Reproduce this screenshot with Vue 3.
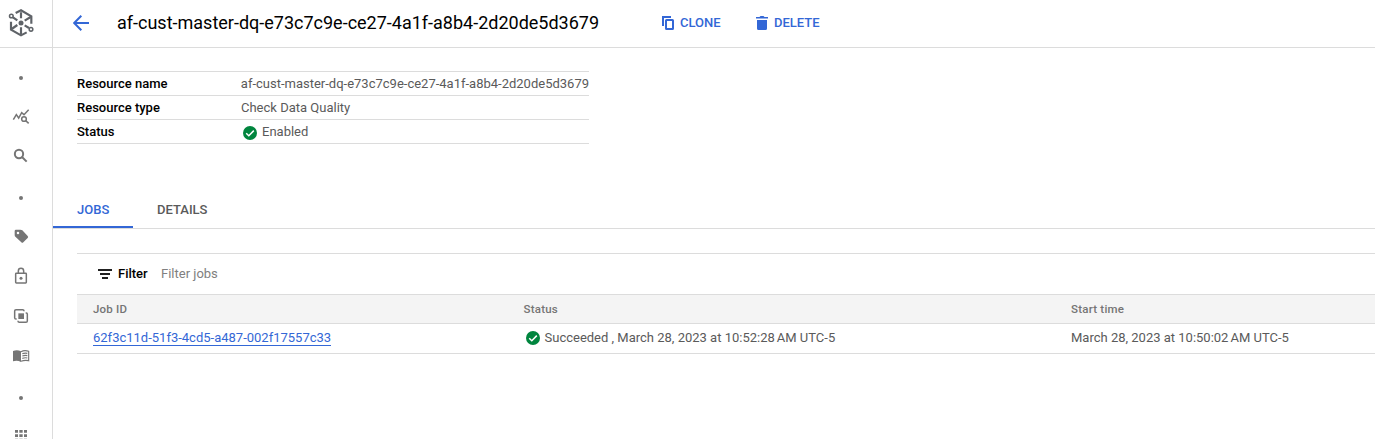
<script setup>
const navItems = ['dot', 'explore', 'search', 'dot', 'tag', 'lock', 'overlap', 'book', 'dot', 'grid']
const resourceName = 'af-cust-master-dq-e73c7c9e-ce27-4a1f-a8b4-2d20de5d3679'
</script>

<template>
  <div class="shell">
    <nav class="rail">
      <div class="product">
        <svg width="26" height="28" viewBox="24 27 78 84" fill="none" stroke="#5f6368" stroke-width="6.5">
          <path d="M47 39 63 31 94 49V71M33 65V89L63 106 80 97" />
          <path d="M63 37V55M63 82V103M74 62 92 51M52 75 35 87M39 52 52 61M74 76 87 84" />
          <circle cx="34" cy="48" r="5.5" stroke-width="4.5" />
          <circle cx="93" cy="88" r="5.5" stroke-width="4.5" />
          <circle cx="63" cy="69" r="7.5" fill="#5f6368" stroke="none" />
        </svg>
      </div>
      <div class="nav-list">
        <div v-for="(item, i) in navItems" :key="i" class="nav-item">
          <span v-if="item === 'dot'" class="dot"></span>
          <svg v-else-if="item === 'explore'" width="24" height="24" viewBox="27 132 72 72" fill="none" stroke="#757575" stroke-width="4.5">
            <path d="M40 179 49 164 56 174 65 158 72 164 86 149" />
            <circle cx="72" cy="177" r="7" />
            <path d="M77 182 86 190" />
          </svg>
          <svg v-else-if="item === 'search'" width="24" height="24" viewBox="27 251 72 72" fill="none" stroke="#757575" stroke-width="6">
            <circle cx="57" cy="281" r="12.5" />
            <path d="M66 290 80 304" />
          </svg>
          <svg v-else-if="item === 'tag'" width="24" height="24" viewBox="27 132 72 72" fill="#757575">
            <path fill-rule="evenodd" d="M48 149H61Q65 149 67 151L83 168Q86 171 83 174L70 187Q67 190 64 187L47 171Q44 169 44 166V153Q44 149 48 149ZM54 155.5A3.8 3.8 0 1 0 54 163.1 3.8 3.8 0 1 0 54 155.5Z" />
          </svg>
          <svg v-else-if="item === 'lock'" width="24" height="24" viewBox="27 252 72 72" fill="none" stroke="#757575" stroke-width="4.5">
            <rect x="47" y="280" width="32" height="29" rx="2" />
            <path d="M55 280V273A8 8 0 0 1 71 273V280" />
            <circle cx="63" cy="295" r="4.5" fill="#757575" stroke="none" />
          </svg>
          <svg v-else-if="item === 'overlap'" width="24" height="24" viewBox="27 12 72 72" fill="none" stroke="#757575" stroke-width="4.5">
            <path d="M50 57H48Q44 57 44 53V33Q44 29 48 29H68Q72 29 72 33V34" />
            <path d="M77 39H79Q82 39 82 43V63Q82 67 78 67H58Q54 67 54 63V62" />
            <rect x="55" y="40" width="17" height="17" fill="#757575" stroke="none" />
          </svg>
          <svg v-else-if="item === 'book'" width="24" height="24" viewBox="27 132 72 72" fill="none" stroke="#757575" stroke-width="3.5">
            <path d="M39 153Q52 148 63 154V186Q52 180 39 184Z" fill="#757575" stroke="none" />
            <path d="M63 155Q74 149 86 154V182Q74 179 63 184M67 161Q75 158 82 160M67 168Q75 165 82 167M67 175Q75 172 82 174" />
          </svg>
          <svg v-else width="24" height="24" viewBox="27 372 72 72" fill="#757575">
            <path d="M45 390h9v8h-9zM58 390h10v8h-10zM72 390h9v8h-9zM45 403h9v8h-9zM58 403h10v8h-10zM72 403h9v8h-9zM45 416h9v8h-9zM58 416h10v8h-10zM72 416h9v8h-9z" />
          </svg>
        </div>
      </div>
    </nav>

    <main class="main">
      <header class="topbar">
        <svg class="back" width="16" height="16" viewBox="0 0 16 16" fill="none" stroke="#3367d6" stroke-width="2">
          <path d="M16 8H1.5M8.3 .8 1.2 8 8.3 15.2" />
        </svg>
        <h1>{{ resourceName }}</h1>
        <button class="action clone">
          <svg width="12" height="14" viewBox="0 0 12 14" fill="none" stroke="#3367d6" stroke-width="2">
            <path d="M1 10V1H9" />
            <rect x="4" y="4" width="7" height="9" rx=".5" />
          </svg>
          <span>CLONE</span>
        </button>
        <button class="action delete">
          <svg width="12" height="14" viewBox="0 0 12 14" fill="#3367d6">
            <path d="M0 1H3.5L4.5 0H7.5L8.5 1H12V2.6H0ZM1 4H11V12.5Q11 14 9.5 14H2.5Q1 14 1 12.5Z" />
          </svg>
          <span>DELETE</span>
        </button>
      </header>

      <dl class="summary">
        <div><dt>Resource name</dt><dd class="full">{{ resourceName }}</dd></div>
        <div><dt>Resource type</dt><dd class="kind">Check Data Quality</dd></div>
        <div>
          <dt>Status</dt>
          <dd class="state">
            <svg class="check" width="14" height="14" viewBox="0 0 14 14">
              <circle cx="7" cy="7" r="7" fill="#00853e" />
              <path d="M3.2 7.2 5.8 9.7 10.8 4.6" fill="none" stroke="#fff" stroke-width="1.5" />
            </svg>
            <span>Enabled</span>
          </dd>
        </div>
      </dl>

      <div class="tabs">
        <div class="tab active">JOBS</div>
        <div class="tab">DETAILS</div>
      </div>

      <section class="jobs">
        <div class="filter">
          <svg width="14" height="10" viewBox="0 0 14 10" fill="#212121">
            <path d="M0 0H14V2H0ZM2 4H12V6H2ZM4 8H10V10H4Z" />
          </svg>
          <b>Filter</b>
          <span class="hint">Filter jobs</span>
        </div>
        <div class="row head">
          <span>Job ID</span><span>Status</span><span>Start time</span>
        </div>
        <div class="row body">
          <span><a>62f3c11d-51f3-4cd5-a487-002f17557c33</a></span>
          <span class="state">
            <svg class="check" width="14" height="14" viewBox="0 0 14 14">
              <circle cx="7" cy="7" r="7" fill="#00853e" />
              <path d="M3.2 7.2 5.8 9.7 10.8 4.6" fill="none" stroke="#fff" stroke-width="1.5" />
            </svg>
            <span class="when">Succeeded , March 28, 2023 at 10:52:28<i>AM UTC-5</i></span>
          </span>
          <span class="when">March 28, 2023 at 10:50:02<i>AM UTC-5</i></span>
        </div>
      </section>
    </main>
  </div>
</template>

<style>
body {
  margin: 0;
  background: #fff;
}
</style>

<style scoped>
.shell {
  display: flex;
  height: 439px;
  overflow: hidden;
  font: 13px/20px Roboto, "Liberation Sans", sans-serif;
  color: #5a5a5a;
}
.rail {
  flex: none;
  box-sizing: border-box;
  width: 53px;
  border-right: 1px solid #dcdcdc;
}
.product {
  height: 38px;
  padding: 9px 0 0 8px;
  border-bottom: 1px solid #dcdcdc;
}
.product svg,
.nav-item svg {
  display: block;
}
.nav-list {
  padding-top: 8px;
}
.nav-item {
  display: flex;
  align-items: center;
  justify-content: center;
  width: 42px;
  height: 40px;
}
.dot {
  width: 4px;
  height: 4px;
  margin-top: 4px;
  border-radius: 50%;
  background: #757575;
}
.main {
  flex: 1;
  min-width: 0;
}
.topbar {
  display: flex;
  align-items: center;
  height: 45px;
  padding: 0 0 2px 20px;
  box-sizing: content-box;
  border-bottom: 1px solid #dcdcdc;
}
h1 {
  width: 482px;
  margin: 0 0 0 28px;
  font-size: 18px;
  font-weight: 400;
  line-height: 24px;
  color: #000;
  white-space: nowrap;
}
.action {
  display: flex;
  align-items: center;
  gap: 6px;
  padding: 0;
  border: 0;
  background: none;
  font: 500 13px/20px Roboto, sans-serif;
  color: #3367d6;
}
.clone {
  width: 94px;
  margin-left: 63px;
}
.summary {
  width: 512px;
  margin: 23px 0 0 24px;
  border-top: 1px solid #dcdcdc;
}
.summary > div {
  display: flex;
  height: 23px;
  border-bottom: 1px solid #dcdcdc;
  line-height: 23px;
  white-space: nowrap;
}
dt {
  width: 164px;
  font-weight: 500;
  color: #000;
}
dd {
  margin: 0;
}
.state {
  display: flex;
  align-items: center;
}
.check {
  margin: 1px 5px 0 2px;
}
.summary .check {
  margin-top: 3px;
}
.tabs {
  display: flex;
  height: 37px;
  margin-top: 47px;
  border-bottom: 1px solid #dcdcdc;
  font-weight: 500;
}
.tab {
  box-sizing: border-box;
  height: 37px;
  padding: 9px 24px 0;
}
.active {
  width: 80px;
  border-bottom: 2px solid #3367d6;
  color: #3367d6;
}
.jobs {
  margin: 24px 0 0 24px;
  border-top: 1px solid #dcdcdc;
}
.filter {
  display: flex;
  align-items: center;
  height: 40px;
  padding-left: 21px;
}
.filter b {
  width: 43px;
  margin-left: 6px;
  font-weight: 500;
  color: #000;
}
.hint {
  color: #808080;
}
.row {
  display: grid;
  grid-template-columns: 430.5px 547.5px 1fr;
  padding-left: 16px;
  border-bottom: 1px solid #dcdcdc;
  white-space: nowrap;
}
.head {
  height: 28px;
  border-top: 1px solid #dcdcdc;
  background: #f4f4f4;
  font-size: 11.5px;
  font-weight: 500;
  letter-spacing: .22px;
  line-height: 29px;
  color: #757575;
}
.body {
  height: 27px;
  padding-bottom: 2px;
  line-height: 27px;
}
a {
  display: inline-block;
  height: 15px;
  border-bottom: 1px solid #3367d6;
  line-height: 15px;
  color: #3367d6;
}
i {
  margin-left: 2px;
  font-style: normal;
}
</style>
